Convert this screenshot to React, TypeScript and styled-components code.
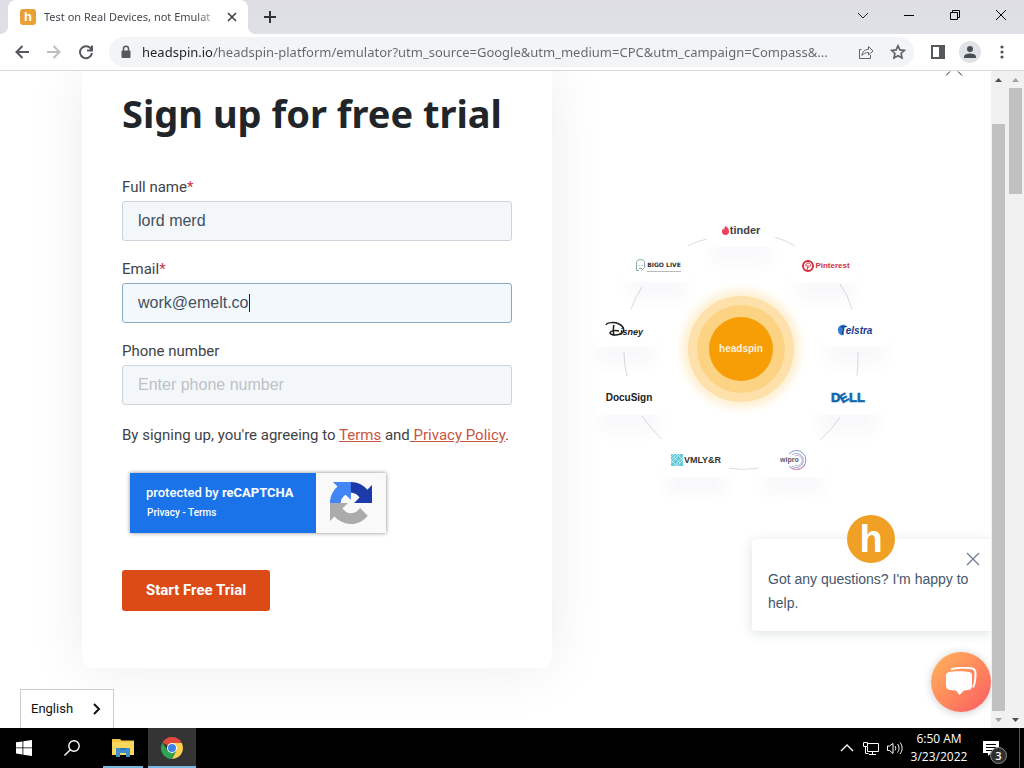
import React from "react";
import styled, { createGlobalStyle, css } from "styled-components";

const ui = `"Open Sans", "Noto Sans", sans-serif`;
const noto = `"Noto Sans", "Open Sans", sans-serif`;
const roboto = `Roboto, "Liberation Sans", sans-serif`;
const arial = `"Liberation Sans", Arial, sans-serif`;

const Global = createGlobalStyle`
  *, *::before, *::after { box-sizing: border-box; }
  body { margin: 0; background: #fff; font-family: ${roboto}; }
  button { border: 0; padding: 0; background: none; font: inherit; color: inherit; cursor: pointer; }
  svg { display: block; flex: none; }
`;

const Desktop = styled.div`
  display: flex;
  flex-direction: column;
  min-height: 100vh;
`;

/* ---------- browser chrome ---------- */

const TabStrip = styled.header`
  display: flex;
  align-items: stretch;
  height: 34px;
  padding-left: 8px;
  background: linear-gradient(#dedde5, #dee1e6);
`;

const Tab = styled.div`
  position: relative;
  display: flex;
  align-items: center;
  gap: 8px;
  width: 240px;
  padding: 0 8px 0 12px;
  background: #fff;
  border-radius: 8px 8px 0 0;
  &::before,
  &::after {
    content: "";
    position: absolute;
    bottom: 0;
    width: 8px;
    height: 8px;
  }
  &::before {
    left: -8px;
    background: radial-gradient(circle at 0 0, transparent 8px, #fff 8px);
  }
  &::after {
    right: -8px;
    background: radial-gradient(circle at 100% 0, transparent 8px, #fff 8px);
  }
`;

const Favicon = styled.span`
  flex: none;
  width: 16px;
  height: 16px;
  border-radius: 3px;
  background: #e9a035;
  color: #fff;
  font: bold 13px/16px ${arial};
  text-align: center;
`;

const TabTitle = styled.span`
  flex: 1;
  min-width: 0;
  white-space: nowrap;
  font: 11px/16px ${noto};
  color: #45484d;
  mask-image: linear-gradient(90deg, #000 152px, transparent 180px);
`;

const IconButton = styled.button<{ $w?: number }>`
  display: flex;
  flex: none;
  align-items: center;
  justify-content: center;
  width: ${(p) => p.$w ?? 32}px;
  height: 100%;
`;

const WindowControls = styled.div`
  display: flex;
  margin-left: auto;
  padding-bottom: 5px;
`;

const Toolbar = styled.nav`
  display: flex;
  align-items: center;
  height: 37px;
  padding: 0 6px;
  border-bottom: 1px solid #d9d9db;
  background: #fff;
`;

const AddressBar = styled.div`
  display: flex;
  flex: 1;
  align-items: center;
  min-width: 0;
  height: 30px;
  margin: 0 8px 0 7px;
  padding-left: 11px;
  border-radius: 15px;
  background: #f3f4f5;
`;

const Address = styled.input`
  flex: 1;
  min-width: 0;
  height: 24px;
  margin-left: 10px;
  padding: 0;
  border: 0;
  outline: 0;
  text-overflow: ellipsis;
  font: 13px/24px ${noto};
  color: transparent;
  background: linear-gradient(90deg, #202124 71px, #63676c 71px);
  background-clip: text;
`;

const Profile = styled.span`
  display: flex;
  align-items: center;
  justify-content: center;
  width: 22px;
  height: 22px;
  border-radius: 50%;
  background: #dfe2e6;
`;

/* ---------- page ---------- */

const Body = styled.div`
  display: flex;
  flex: 1;
  min-height: 657px;
`;

const Viewport = styled.main`
  position: relative;
  display: flex;
  flex: 1;
  align-items: flex-start;
  min-width: 0;
  overflow: hidden;
  padding: 0 60px 60px 82px;
  background: #fff;
`;

const Card = styled.form`
  flex: 0 1 470px;
  padding: 18px 40px 57px;
  border-radius: 0 0 12px 12px;
  background: #fff;
  box-shadow: 0 0 60px rgba(0, 0, 0, 0.08);
`;

const Title = styled.h1`
  margin: 0 0 40px;
  font: bold 38px/48px ${noto};
  color: #212529;
  white-space: nowrap;
`;

const Field = styled.div`
  display: flex;
  flex-direction: column;
  margin-bottom: 18px;
`;

const Label = styled.label`
  margin-bottom: 4px;
  font: 15px/20px ${roboto};
  color: #3f4347;
  span {
    color: #d0314a;
  }
`;

const InputBox = styled.div<{ $active?: boolean }>`
  display: flex;
  align-items: center;
  height: 40px;
  padding: 0 15px;
  border: 1px solid ${(p) => (p.$active ? "#8aa9c4" : "#cdd4db")};
  border-radius: 3px;
  background: ${(p) => (p.$active ? "#f3f8fd" : "#f4f7fa")};
`;

const TextInput = styled.input<{ $hug?: boolean }>`
  min-width: 0;
  padding: 0;
  border: 0;
  outline: 0;
  background: none;
  font: 16px/20px ${arial};
  color: #43505e;
  ${(p) =>
    p.$hug
      ? css`
          field-sizing: content;
        `
      : css`
          flex: 1;
        `}
  &::placeholder {
    color: #bcc1c8;
    opacity: 1;
  }
`;

const Caret = styled.span`
  width: 1px;
  height: 18px;
  background: #222;
`;

const Consent = styled.p`
  margin: 20px 0 28px;
  font: 15px/20px ${roboto};
  color: #3f4347;
  white-space: nowrap;
  a {
    color: #c8553f;
  }
`;

const Recaptcha = styled.div`
  display: flex;
  width: 256px;
  height: 60px;
  margin-left: 8px;
  background: #f9f9f9;
  box-shadow: 0 0 4px #888;
`;

const RecaptchaText = styled.div`
  display: flex;
  flex-direction: column;
  gap: 3px;
  width: 186px;
  padding: 11px 16px;
  background: #1a73e8;
  color: #fff;
  font: 500 13px/18px ${roboto};
  strong {
    font-weight: 700;
  }
  small {
    padding-left: 1px;
    font: 500 10px/16px ${roboto};
  }
  a {
    color: inherit;
    text-decoration: none;
  }
`;

const RecaptchaMark = styled.div`
  display: flex;
  flex: 1;
  align-items: center;
  justify-content: center;
`;

const Submit = styled.button`
  && {
    display: block;
    height: 41px;
    margin-top: 37px;
    padding: 0 24px 1px;
    border-radius: 3px;
    background: #dc4a16;
    color: #fff;
    font: bold 15px/24px ${roboto};
  }
`;

/* ---------- customer diagram ---------- */

const Orbit = styled.section`
  position: relative;
  flex: none;
  width: 300px;
  height: 300px;
  margin: 128px 0 0 39px;
`;

const Node = styled.div<{ $x: number; $y: number }>`
  position: absolute;
  left: ${(p) => p.$x}px;
  top: ${(p) => p.$y}px;
  display: flex;
  align-items: center;
  justify-content: center;
  gap: 1px;
  width: 66px;
  height: 34px;
  transform: translate(-50%, -50%);
  border-radius: 4px;
  background: #fff;
  box-shadow: 0 22px 14px -4px rgba(90, 110, 150, 0.04);
  white-space: nowrap;
`;

const Brand = styled.span<{ $size: number; $color: string; $family?: string }>`
  font-family: ${(p) => p.$family ?? arial};
  font-size: ${(p) => p.$size}px;
  line-height: 12px;
  font-weight: bold;
  color: ${(p) => p.$color};
`;

const Stack = styled.span`
  display: flex;
  flex-direction: column;
`;

const Rule = styled.i`
  height: 1px;
  background: #b9bcbf;
`;

const Hub = styled.div`
  position: absolute;
  left: 118px;
  top: 118px;
  width: 64px;
  height: 64px;
  border-radius: 50%;
  background: #f79d05;
  box-shadow: 0 0 0 12px #fbd383, 0 0 0 21px #fde0aa, 0 0 8px 27px #fef0d2;
  color: #fdf1dc;
  font: bold 10px/64px ${arial};
  text-align: center;
`;

/* ---------- overlays ---------- */

const CloseTip = styled.svg`
  position: absolute;
  top: 0;
  right: 28px;
`;

const Language = styled.button`
  && {
    position: absolute;
    left: 20px;
    bottom: 0;
    display: flex;
    align-items: center;
    justify-content: space-between;
    width: 94px;
    height: 39px;
    padding: 0 12px 0 10px;
    border: 1px solid #c9ccd0;
    border-bottom: 0;
    background: #fff;
    color: #111;
    font: 13px/20px ${roboto};
  }
`;

const Chat = styled.aside`
  position: absolute;
  right: 0;
  bottom: 16px;
  display: flex;
  flex-direction: column;
  align-items: flex-end;
  gap: 21px;
`;

const Bubble = styled.div`
  position: relative;
  width: 239px;
  padding: 28px 16px 16px;
  border-radius: 4px 0 0 4px;
  background: #fff;
  box-shadow: 0 2px 12px rgba(45, 62, 80, 0.16);
  p {
    margin: 0;
    font: 14px/24px ${arial};
    color: #46566a;
  }
`;

const Avatar = styled.span`
  position: absolute;
  top: -24px;
  left: 95px;
  width: 48px;
  height: 48px;
  border-radius: 50%;
  background: #f0a024;
  color: #fff;
  font: bold 38px/49px ${arial};
  text-align: center;
`;

const Dismiss = styled.button`
  position: absolute;
  top: 13px;
  right: 11px;
`;

const Launcher = styled.button`
  && {
    display: flex;
    align-items: center;
    justify-content: center;
    width: 60px;
    height: 60px;
    border-radius: 50%;
    background: linear-gradient(135deg, #ffb05c 5%, #ff8a5c 50%, #fb5f63 95%);
    box-shadow: 0 1px 8px rgba(0, 0, 0, 0.2);
  }
`;

/* ---------- scrollbars ---------- */

const Track = styled.div<{ $inset: number }>`
  display: flex;
  flex: none;
  flex-direction: column;
  align-items: center;
  padding: 0 2px 0 ${(p) => p.$inset}px;
  background: #f1f1f1;
`;

const Arrow = styled.span`
  display: flex;
  flex: none;
  align-items: center;
  justify-content: center;
  height: 17px;
`;

const Thumb = styled.div<{ $before: number; $size: number; $after: number }>`
  display: flex;
  flex: 1;
  flex-direction: column;
  width: 13px;
  &::before {
    content: "";
    flex: ${(p) => p.$before};
  }
  &::after {
    content: "";
    flex: ${(p) => p.$after};
  }
  span {
    flex: ${(p) => p.$size};
    background: #c1c1c1;
  }
`;

/* ---------- taskbar ---------- */

const Taskbar = styled.footer`
  display: flex;
  height: 40px;
  background: #000;
  color: #fff;
`;

const Task = styled.button<{ $open?: boolean; $current?: boolean }>`
  && {
    display: flex;
    align-items: center;
    justify-content: center;
    width: 48px;
    height: 40px;
    margin: ${(p) => (p.$open && !p.$current ? "0 1px 0 3px" : "0")};
    background: ${(p) => (p.$current ? "#343434" : "none")};
    ${(p) => p.$open && css`
      background-image: linear-gradient(#76b9e0, #76b9e0);
      background-repeat: no-repeat;
      background-position: 50% 100%;
      background-size: ${p.$current ? "100%" : "40px"} 2px;
    `}
  }
`;

const Tray = styled.div`
  display: flex;
  align-items: center;
  margin-left: auto;
`;

const Clock = styled.time`
  width: 67px;
  padding-right: 3px;
  font: 12px/18px ${ui};
  text-align: center;
  white-space: nowrap;
`;

const Notice = styled.button`
  && {
    position: relative;
    display: flex;
    align-items: center;
    width: 46px;
    height: 40px;
    padding-left: 9px;
    border-right: 1px solid #555;
    margin-right: 4px;
  }
`;

const Badge = styled.span`
  position: absolute;
  left: 16px;
  top: 19px;
  width: 17px;
  height: 17px;
  border: 1px solid #8a8a8a;
  border-radius: 50%;
  background: #2f2f2f;
  font: 600 11px/15px ${ui};
  text-align: center;
`;

const Line = ({ d, w = 16, h = 16, c = "#202124", s = 1 }: {
  d: string; w?: number; h?: number; c?: string; s?: number;
}) => (
  <svg width={w} height={h} viewBox={`0 0 ${w} ${h}`} fill="none" stroke={c} strokeWidth={s} aria-hidden="true">
    <path d={d} />
  </svg>
);

const Triangle = ({ down, c }: { down?: boolean; c: string }) => (
  <Arrow>
    <svg width="7" height="4" viewBox="0 0 7 4" aria-hidden="true">
      <path d={down ? "M0 0h7L3.5 4z" : "M0 4h7L3.5 0z"} fill={c} />
    </svg>
  </Arrow>
);

const orbitLinks = [
  "M97 47Q106 42 116 40", "M184 38Q194 41 204 47", "M40 110Q44 98 51 88", "M249 85Q257 96 261 110",
  "M33 153Q33 166 36 177", "M267 153Q267 166 266 177", "M51 217Q60 230 71 240", "M249 218Q241 231 229 241",
  "M137 269Q152 272 168 269",
];

export default function App() {
  return (
    <>
      <Global />
      <Desktop>
        <TabStrip>
          <Tab>
            <Favicon>h</Favicon>
            <TabTitle>Test on Real Devices, not Emulat</TabTitle>
            <IconButton $w={16} aria-label="Close tab">
              <Line d="M4 4l8 8M12 4l-8 8" s={1.6} c="#3c4043" />
            </IconButton>
          </Tab>
          <IconButton $w={44} aria-label="New tab">
            <Line d="M8 2v12M2 8h12" s={2} c="#303338" />
          </IconButton>
          <WindowControls>
            <IconButton $w={46} aria-label="Search tabs"><Line d="M3 6l5 5 5-5" /></IconButton>
            <IconButton $w={46} aria-label="Minimize"><Line d="M3 8.5h10" c="#000" /></IconButton>
            <IconButton $w={46} aria-label="Restore">
              <Line d="M3.5 5.5h7v7h-7zM5.5 5.5v-2h7v7h-2" c="#000" />
            </IconButton>
            <IconButton $w={46} aria-label="Close"><Line d="M3 3l10 10M13 3L3 13" c="#000" /></IconButton>
          </WindowControls>
        </TabStrip>

        <Toolbar>
          <IconButton aria-label="Back"><Line d="M15 8H2.5M8.5 2L2.5 8l6 6" s={2} c="#54585c" /></IconButton>
          <IconButton aria-label="Forward"><Line d="M1 8h12.5M7.5 2l6 6-6 6" s={2} c="#bcbec1" /></IconButton>
          <IconButton aria-label="Reload">
            <Line d="M13.3 5.3A6 6 0 1 0 14 9M14 1.5v5H9" s={2} c="#54585c" />
          </IconButton>
          <AddressBar>
            <svg width="12" height="14" viewBox="0 0 12 14" aria-hidden="true">
              <path d="M3.5 6V3.8a2.5 2.5 0 0 1 5 0V6" fill="none" stroke="#55595e" strokeWidth="1.5" />
              <rect x="1.5" y="5.5" width="9" height="7.5" rx="1" fill="#55595e" />
            </svg>
            <Address
              aria-label="Address"
              defaultValue="headspin.io/headspin-platform/emulator?utm_source=Google&utm_medium=CPC&utm_campaign=Compass&..."
            />
            <IconButton aria-label="Share">
              <Line
                d="M3.5 5.5h-2v9h11V11M4 11.5c.4-4 2.5-6 6.5-6V2.5l4.500 4.500-4.500 4V8.500C7.500 8.500 5.500 9.400 4 11.500z"
                c="#5f6368"
              />
            </IconButton>
            <IconButton aria-label="Bookmark">
              <Line d="M8 1.800l1.900 4.100 4.500.5-3.300 3.100.9 4.400L8 11.700l-4 2.200.9-4.400L1.600 6.400l4.500-.5z" s={1.700} c="#5f6368" />
            </IconButton>
          </AddressBar>
          <IconButton aria-label="Side panel">
            <svg width="14" height="14" viewBox="0 0 14 14" aria-hidden="true">
              <path d="M0 0h14v14H0zM2 2v10h6V2z" fill="#55595e" fillRule="evenodd" />
            </svg>
          </IconButton>
          <IconButton aria-label="Profile">
            <Profile>
              <svg width="12" height="12" viewBox="0 0 12 12" aria-hidden="true">
                <circle cx="6" cy="3" r="3" fill="#4a4f55" />
                <path d="M0 12v-1.5C0 8.2 4 7.4 6 7.4s6 .8 6 3.1V12z" fill="#4a4f55" />
              </svg>
            </Profile>
          </IconButton>
          <IconButton aria-label="Menu">
            <svg width="4" height="14" viewBox="0 0 4 14" fill="#505458" aria-hidden="true">
              <circle cx="2" cy="2" r="1.6" /><circle cx="2" cy="7" r="1.6" /><circle cx="2" cy="12" r="1.6" />
            </svg>
          </IconButton>
        </Toolbar>

        <Body>
          <Viewport>
            <Card onSubmit={(e) => e.preventDefault()}>
              <Title>Sign up for free trial</Title>
              <Field>
                <Label htmlFor="name">Full name<span>*</span></Label>
                <InputBox><TextInput id="name" defaultValue="lord merd" /></InputBox>
              </Field>
              <Field>
                <Label htmlFor="email">Email<span>*</span></Label>
                <InputBox $active>
                  <TextInput id="email" $hug defaultValue="work@emelt.co" />
                  <Caret />
                </InputBox>
              </Field>
              <Field>
                <Label htmlFor="phone">Phone number</Label>
                <InputBox><TextInput id="phone" type="tel" placeholder="Enter phone number" /></InputBox>
              </Field>
              <Consent>
                By signing up, you're agreeing to <a href="#terms">Terms</a> and<a href="#privacy"> Privacy Policy</a>.
              </Consent>
              <Recaptcha>
                <RecaptchaText>
                  <span>protected by <strong>reCAPTCHA</strong></span>
                  <small><a href="#captcha-privacy">Privacy</a> - <a href="#captcha-terms">Terms</a></small>
                </RecaptchaText>
                <RecaptchaMark>
                  <svg width="42" height="42" viewBox="0 0 64 64" aria-hidden="true">
                    <path fill="#1c3aa9" d="M64 31.955l-.033-1.370V4.687l-7.160 7.160C50.948 4.674 42.033.093 32.050.093c-10.400 0-19.622 4.960-25.458 12.640l11.736 11.860a15.550 15.550 0 0 1 4.754-5.334c2.050-1.600 4.952-2.906 8.968-2.906.485 0 .860.057 1.135.163 4.976.393 9.288 3.140 11.828 7.124l-8.307 8.307L64 31.953" />
                    <path fill="#4285f4" d="M31.862.094l-1.370.033H4.594l7.160 7.160C4.580 13.147 0 22.060 0 32.046c0 10.400 4.960 19.622 12.640 25.458L24.500 45.768a15.550 15.550 0 0 1-5.334-4.754c-1.600-2.050-2.906-4.952-2.906-8.968 0-.485.057-.860.163-1.135.393-4.976 3.140-9.288 7.124-11.828l8.307 8.307L31.860.095" />
                    <path fill="#ababab" d="M.001 32.045l.033 1.370v25.898l7.160-7.160c5.860 7.173 14.774 11.754 24.760 11.754 10.400 0 19.622-4.960 25.458-12.640l-11.736-11.860a15.550 15.550 0 0 1-4.754 5.334c-2.050 1.600-4.952 2.906-8.968 2.906-.485 0-.860-.057-1.135-.163-4.976-.393-9.288-3.140-11.828-7.124l8.307-8.307c-10.522.040-22.400.066-27.295-.005" />
                  </svg>
                </RecaptchaMark>
              </Recaptcha>
              <Submit type="submit">Start Free Trial</Submit>
            </Card>

            <Orbit aria-label="Customers">
              <svg width="300" height="300" viewBox="0 0 300 300" fill="none" stroke="#dadde1" aria-hidden="true">
                {orbitLinks.map((d) => <path key={d} d={d} />)}
              </svg>
              <Hub>headspin</Hub>
              <Node $x={150} $y={31}>
                <svg width="7" height="9" viewBox="0 0 7 9" aria-hidden="true">
                  <path d="M3.6 0C6 1.5 7 3.5 7 5.5A3.4 3.4 0 0 1 0 5.5C0 4.2.6 3.3 1.4 2.6c0 .7.3 1.1.8 1.3C2.2 2.2 2.7 1 3.6 0z" fill="#ec3f62" />
                </svg>
                <Brand $size={11} $color="#3f4246">tinder</Brand>
              </Node>
              <Node $x={67} $y={66}>
                <svg width="11" height="13" viewBox="0 0 11 13" fill="none" stroke="#86aaa0" aria-hidden="true">
                  <path d="M4 11.5H1.5v-8c0-4 8-4 8 0v5l-3 3M4 6v1M7 6v1M4 9.5h3" />
                </svg>
                <Stack>
                  <Brand $size={6} $color="#333" $family={`"DejaVu Sans", sans-serif`}>BIGO LIVE</Brand>
                  <Rule />
                </Stack>
              </Node>
              <Node $x={235} $y={67}>
                <svg width="12" height="12" viewBox="0 0 12 12" fill="none" aria-hidden="true">
                  <circle cx="6" cy="6" r="5" stroke="#d32f3b" strokeWidth="2" />
                  <path d="M5 10l1.200-5M4.200 6.500C3.200 4 5 3 6.300 3c3 0 2.500 4.500.2 4.500" stroke="#d32f3b" />
                </svg>
                <Brand $size={8} $color="#d0323d">Pinterest</Brand>
              </Node>
              <Node $x={35} $y={131}>
                <svg width="42" height="20" viewBox="0 0 42 20" aria-hidden="true">
                  <path d="M1 5C2 2 10 2 14 4c6 3 6 8 1 10-3 1.400-9 1.400-10-1 0-2 5-3 9-2M9 5c-1 3-1 6 0 11" fill="none" stroke="#1c1c1c" strokeWidth="1.500" />
                  <text x="15" y="15" fontFamily="Liberation Sans, sans-serif" fontSize="9" fontWeight="bold" fontStyle="italic" fill="#1c1c1c">isney</text>
                </svg>
              </Node>
              <Node $x={265} $y={131}>
                <svg width="40" height="16" viewBox="0 0 40 16" aria-hidden="true">
                  <path d="M2 9C1 5 5 2 10 3c-3 2-4 4-3 7l1 3C5 14 2.500 12 2 9z" fill="#2f7ddb" />
                  <text x="4" y="12" fontFamily="Liberation Sans, sans-serif" fontSize="10" fontWeight="bold" fontStyle="italic" fill="#17398c">Telstra</text>
                </svg>
              </Node>
              <Node $x={38} $y={199}>
                <Brand $size={10} $color="#222">DocuSign</Brand>
              </Node>
              <Node $x={257} $y={199}>
                <svg width="40" height="20" viewBox="0 0 40 20" aria-hidden="true">
                  <g fontFamily="Liberation Sans, sans-serif" fontSize="13" fontWeight="bold" fill="#0f69ad" stroke="#0f69ad" strokeWidth=".7">
                    <text x="3" y="14">D</text>
                    <text transform="rotate(-30 16 10)" x="12" y="14" fontSize="12">E</text>
                    <text x="21" y="14">LL</text>
                  </g>
                </svg>
              </Node>
              <Node $x={105} $y={261}>
                <svg width="12" height="12" viewBox="0 0 12 12" aria-hidden="true">
                  <rect width="12" height="12" fill="#68cbdc" />
                  <path d="M0 3l3-3M0 6l6-6M0 9l9-9M3 12l9-9M6 12l6-6M0 6l6 6M3 3l6 6M6 0l6 6" stroke="#d7f3f7" strokeWidth=".7" />
                </svg>
                <Brand $size={9} $color="#333">VMLY&amp;R</Brand>
              </Node>
              <Node $x={203} $y={261}>
                <svg width="28" height="22" viewBox="0 0 28 22" fill="none" aria-hidden="true">
                  <path d="M9 5a9.500 9.500 0 1 1 0 12" stroke="#8297c9" />
                  <path d="M12 6a7 7 0 1 1 0 11" stroke="#9ea5d0" />
                  <path d="M15 7a5 5 0 1 1 0 9" stroke="#c7a5c4" />
                  <path d="M9 17c4 5 12 5 16-1" stroke="#e291a5" />
                  <text x="0" y="13" fontFamily="Liberation Sans, sans-serif" fontSize="7" fontWeight="bold" fill="#55576a">wipro</text>
                </svg>
              </Node>
            </Orbit>

            <CloseTip width="18" height="5" viewBox="0 0 18 5" aria-hidden="true">
              <path d="M1 4.500L5 .5M13 .5l4 4" stroke="#222" />
            </CloseTip>

            <Language type="button" aria-haspopup="listbox">
              English
              <Line d="M1 1l5 5-5 5" w={8} h={12} s={2} c="#111" />
            </Language>

            <Chat>
              <Bubble>
                <Avatar>h</Avatar>
                <Dismiss aria-label="Dismiss message">
                  <Line d="M1 1l12 12M13 1L1 13" w={14} h={14} s={1.300} c="#6d7d8f" />
                </Dismiss>
                <p>Got any questions? I'm happy to help.</p>
              </Bubble>
              <Launcher aria-label="Open chat">
                <svg width="32" height="30" viewBox="0 0 32 30" aria-hidden="true">
                  <path d="M6 2.500C12 .5 22 .5 27.500 1.500c2.500.5 3 2 3 5 0 5-.5 10-2.500 14" fill="none" stroke="#fff" strokeWidth="2" />
                  <path d="M4.500 5C10 4 20 4 24.500 5c1.800.4 2.500 1.500 2.500 3.500v10c0 2.500-1 4-3.500 4.500-1.500.3-3 .5-4.500.6L14.500 28l-3.500-4.400c-2-.1-4-.3-6-.6C2.500 22.500 1 21 1 18.500v-10C1 6.500 2.200 5.400 4.500 5z" fill="#fff" />
                </svg>
              </Launcher>
            </Chat>
          </Viewport>
          <Track $inset={1}>
            <Triangle c="#505050" />
            <Thumb $before={36} $size={587} $after={0}><span /></Thumb>
            <Triangle down c="#a3a3a3" />
          </Track>
          <Track $inset={2}>
            <Triangle c="#a3a3a3" />
            <Thumb $before={0} $size={106} $after={517}><span /></Thumb>
            <Triangle down c="#505050" />
          </Track>
        </Body>

        <Taskbar>
          <Task aria-label="Start">
            <svg width="16" height="16" viewBox="0 0 16 16" fill="#fff" aria-hidden="true">
              <path d="M0 2.300l6.500-.9v6.100H0zM7.300 1.300L16 0v7.500H7.300zM0 8.300h6.500v6.200L0 13.600zM7.300 8.300H16V16l-8.700-1.300z" />
            </svg>
          </Task>
          <Task aria-label="Search">
            <svg width="16" height="16" viewBox="0 0 16 16" fill="none" stroke="#fff" strokeWidth="1.4" aria-hidden="true">
              <circle cx="10" cy="6" r="5.2" /><path d="M6.3 9.7L.5 15.5" />
            </svg>
          </Task>
          <Task $open aria-label="File Explorer">
            <svg width="22" height="18" viewBox="0 0 22 18" aria-hidden="true">
              <path d="M0 0h8l1.500 1.500H22V16H0z" fill="#f3c646" />
              <path d="M0 3h22v13H0z" fill="#fbd65c" />
              <path d="M4 9h14v9h-4v-4H8v4H4z" fill="#3d8fd1" />
              <path d="M8 9h6v2H8z" fill="#2f78b8" />
            </svg>
          </Task>
          <Task $open $current aria-label="Chrome">
            <svg width="24" height="24" viewBox="0 0 48 48" aria-hidden="true">
              <path d="M24 24L4.900 13A22 22 0 0 1 43.100 13L43 14H24z" fill="#e0493b" />
              <path d="M24 14h19.600A22 22 0 0 1 24 46l8.700-17z" fill="#fdd14c" />
              <path d="M4.900 13A22 22 0 0 0 24 46l8.700-17L24 34l-8.700-5z" fill="#30a352" />
              <circle cx="24" cy="24" r="10" fill="#fff" />
              <circle cx="24" cy="24" r="8" fill="#3f7fe8" />
            </svg>
          </Task>
          <Tray>
            <IconButton $w={24} aria-label="Show hidden icons">
              <Line d="M2 11l6-6 6 6" c="#fff" s={1.4} />
            </IconButton>
            <IconButton $w={24} aria-label="Network">
              <Line d="M5 3.500h10.500v8h-11V7M.5 2.500h4v4h-4zM2.500 6.500v7h3M9.500 11.500v3M6 14.500h7" c="#fff" />
            </IconButton>
            <IconButton $w={24} aria-label="Volume">
              <Line d="M.5 6v4.500h2l3.500 3v-10L2.500 6zM8 6c1 1.500 1 3 0 4.500M10.500 4c2 2.500 2 6 0 8.500M13 2.500c2.800 3.500 2.800 8 0 11.500" c="#fff" />
            </IconButton>
            <Clock>6:50 AM<br />3/23/2022</Clock>
            <Notice aria-label="Notifications">
              <svg width="17" height="17" viewBox="0 0 17 17" aria-hidden="true">
                <path d="M0 1h16v12H8l-3 3v-3H0z" fill="#fff" />
                <path d="M3 4.500h10M3 7.500h10M3 10.500h6" stroke="#000" />
              </svg>
              <Badge>3</Badge>
            </Notice>
          </Tray>
        </Taskbar>
      </Desktop>
    </>
  );
}
